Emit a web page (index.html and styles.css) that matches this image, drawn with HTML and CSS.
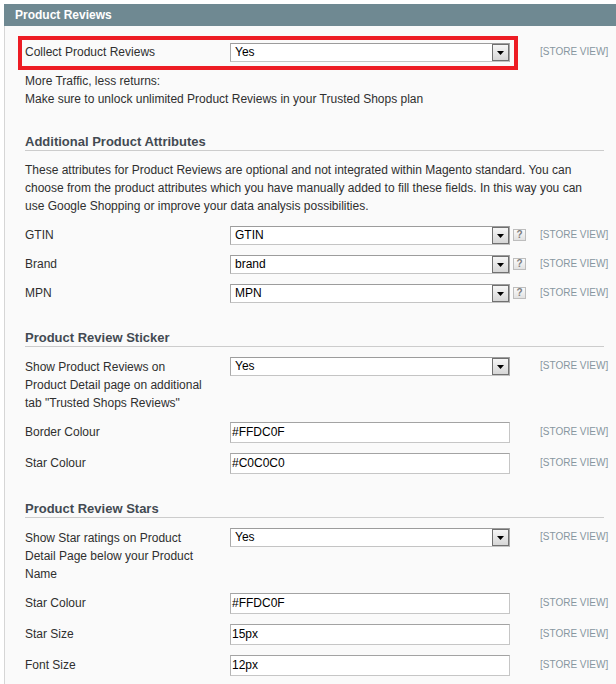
FILE: index.html
```html
<!DOCTYPE html>
<html>
<head>
<meta charset="utf-8">
<title>Product Reviews</title>
<link rel="stylesheet" href="styles.css">
</head>
<body>
<div class="section">
  <div class="section-head">Product Reviews</div>
  <div class="fieldset">

    <div class="row highlight">
      <div class="label">Collect Product Reviews</div>
      <div class="value"><div class="select"><span class="sel-text">Yes</span><span class="arrow"><svg width="7" height="4" viewBox="0 0 7 4"><path d="M0 0H7L3.5 4Z" fill="#000"/></svg></span></div></div>
      <div class="help"></div>
      <div class="scope">[STORE VIEW]</div>
    </div>
    <p class="note">More Traffic, less returns:<br>Make sure to unlock unlimited Product Reviews in your Trusted Shops plan</p>

    <h4 class="subhead">Additional Product Attributes</h4>
    <p class="desc">These attributes for Product Reviews are optional and not integrated within Magento standard. You can choose from the product attributes which you have manually added to fill these fields. In this way you can use Google Shopping or improve your data analysis possibilities.</p>

    <div class="row">
      <div class="label">GTIN</div>
      <div class="value"><div class="select"><span class="sel-text">GTIN</span><span class="arrow"><svg width="7" height="4" viewBox="0 0 7 4"><path d="M0 0H7L3.5 4Z" fill="#000"/></svg></span></div></div>
      <div class="help"><span class="help-icon">?</span></div>
      <div class="scope">[STORE VIEW]</div>
    </div>
    <div class="row">
      <div class="label">Brand</div>
      <div class="value"><div class="select"><span class="sel-text">brand</span><span class="arrow"><svg width="7" height="4" viewBox="0 0 7 4"><path d="M0 0H7L3.5 4Z" fill="#000"/></svg></span></div></div>
      <div class="help"><span class="help-icon">?</span></div>
      <div class="scope">[STORE VIEW]</div>
    </div>
    <div class="row">
      <div class="label">MPN</div>
      <div class="value"><div class="select"><span class="sel-text">MPN</span><span class="arrow"><svg width="7" height="4" viewBox="0 0 7 4"><path d="M0 0H7L3.5 4Z" fill="#000"/></svg></span></div></div>
      <div class="help"><span class="help-icon">?</span></div>
      <div class="scope">[STORE VIEW]</div>
    </div>

    <h4 class="subhead">Product Review Sticker</h4>
    <div class="row multi">
      <div class="label">Show Product Reviews on Product Detail page on additional tab "Trusted Shops Reviews"</div>
      <div class="value"><div class="select"><span class="sel-text">Yes</span><span class="arrow"><svg width="7" height="4" viewBox="0 0 7 4"><path d="M0 0H7L3.5 4Z" fill="#000"/></svg></span></div></div>
      <div class="help"></div>
      <div class="scope">[STORE VIEW]</div>
    </div>
    <div class="row text">
      <div class="label">Border Colour</div>
      <div class="value"><div class="input">#FFDC0F</div></div>
      <div class="help"></div>
      <div class="scope">[STORE VIEW]</div>
    </div>
    <div class="row text">
      <div class="label">Star Colour</div>
      <div class="value"><div class="input">#C0C0C0</div></div>
      <div class="help"></div>
      <div class="scope">[STORE VIEW]</div>
    </div>

    <h4 class="subhead">Product Review Stars</h4>
    <div class="row multi">
      <div class="label">Show Star ratings on Product Detail Page below your Product Name</div>
      <div class="value"><div class="select"><span class="sel-text">Yes</span><span class="arrow"><svg width="7" height="4" viewBox="0 0 7 4"><path d="M0 0H7L3.5 4Z" fill="#000"/></svg></span></div></div>
      <div class="help"></div>
      <div class="scope">[STORE VIEW]</div>
    </div>
    <div class="row text">
      <div class="label">Star Colour</div>
      <div class="value"><div class="input">#FFDC0F</div></div>
      <div class="help"></div>
      <div class="scope">[STORE VIEW]</div>
    </div>
    <div class="row text">
      <div class="label">Star Size</div>
      <div class="value"><div class="input">15px</div></div>
      <div class="help"></div>
      <div class="scope">[STORE VIEW]</div>
    </div>
    <div class="row text">
      <div class="label">Font Size</div>
      <div class="value"><div class="input">12px</div></div>
      <div class="help"></div>
      <div class="scope">[STORE VIEW]</div>
    </div>

  </div>
</div>
</body>
</html>
```

FILE: styles.css
```css
html, body {
  margin: 0;
  padding: 0;
  background: #ffffff;
}

body {
  font-family: "Liberation Sans", Arial, sans-serif;
  font-size: 12px;
  color: #2f2f2f;
  overflow: hidden;
}

.section {
  margin: 4px 0 0 4px;
}

.section-head {
  height: 22px;
  line-height: 22px;
  background: #6f8992;
  color: #ffffff;
  font-weight: bold;
  font-size: 12px;
  padding-left: 11px;
}

.fieldset {
  background: #fafafa;
  border-left: 1px solid #d6d6d6;
  padding: 17px 7px 20px 20px;
}

.row {
  display: grid;
  grid-template-columns: 205px 280px 30px 1fr;
  align-items: start;
  padding-bottom: 10px;
}

.row.highlight {
  position: relative;
}

.row.highlight::after {
  content: "";
  position: absolute;
  left: -7px;
  top: -7px;
  width: 500px;
  height: 34px;
  box-sizing: border-box;
  border: 4px solid #ed1c24;
  pointer-events: none;
}

.label {
  width: 180px;
  line-height: 18px;
  color: #2f2f2f;
}

.row.text .label,
.row.text .scope,
.row.multi .label {
  padding-top: 1px;
}

.select {
  height: 19px;
  box-sizing: border-box;
  border: 1px solid #a9a9a9;
  border-top-color: #9c9c9c;
  border-bottom-color: #c4c4c4;
  background: #ffffff;
  display: flex;
  align-items: center;
  padding-left: 4px;
}

.sel-text {
  color: #000000;
  line-height: 17px;
}

.arrow {
  margin-left: auto;
  width: 17px;
  height: 17px;
  box-sizing: border-box;
  border: 1px solid #707070;
  background: linear-gradient(#f6f6f6, #d6d6d6);
  display: flex;
  align-items: center;
  justify-content: center;
  padding-top: 1px;
}

.arrow svg {
  display: block;
}

.input {
  height: 21px;
  box-sizing: border-box;
  border: 1px solid #c6c6c6;
  border-top-color: #a3a3a3;
  border-left-color: #b4b4b4;
  background: #ffffff;
  padding-left: 1px;
  line-height: 19px;
  color: #000000;
}

.help {
  height: 19px;
}

.help-icon {
  display: block;
  width: 13px;
  height: 12px;
  box-sizing: border-box;
  margin: 3px 0 0 3px;
  border: 1px solid #bdbdbd;
  background: linear-gradient(#fbfbfb, #e2e2e2);
  color: #7d7d7d;
  font-size: 10px;
  font-weight: bold;
  line-height: 10px;
  text-align: center;
}

.scope {
  font-size: 10px;
  line-height: 18px;
  color: #8796a0;
  white-space: nowrap;
}

.note {
  margin: 0 0 26px 0;
  line-height: 18px;
}

.subhead {
  margin: 17px 5px 10px 0;
  font-size: 13px;
  font-weight: bold;
  line-height: 16px;
  color: #434a52;
  border-bottom: 1px solid #cccccc;
}

.desc {
  margin: 0 0 11px 0;
  max-width: 566px;
  line-height: 18px;
}
```
